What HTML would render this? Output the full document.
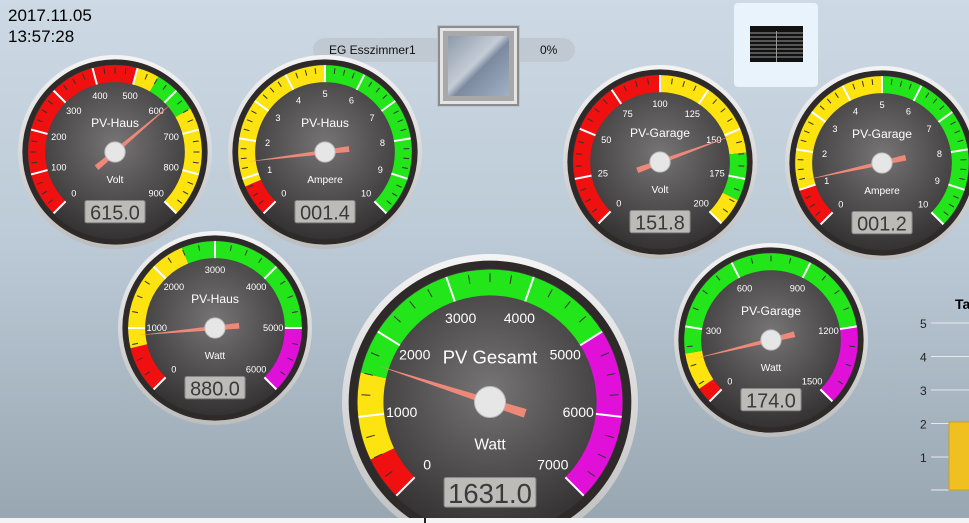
<!DOCTYPE html>
<html><head><meta charset="utf-8"><style>
html,body{margin:0;padding:0;width:969px;height:523px;overflow:hidden}
body{background:linear-gradient(#cdd9e4 0%,#bccbd7 45%,#97a6b1 100%);font-family:"Liberation Sans",sans-serif;position:relative}
#t{position:absolute;left:8px;top:5px;font-size:17px;line-height:21px;color:#000}
.pill{position:absolute;left:313px;top:38px;width:262px;height:24px;border-radius:12px;background:#c0c9d1;font-size:12px;color:#111}
.btn{position:absolute;left:437px;top:25px;width:83px;height:82px;background:#b9c3cc}
.tile{position:absolute;left:734px;top:3px;width:84px;height:84px;border-radius:4px;background:#e9f3fb}
#bot{position:absolute;left:0;top:518px;width:969px;height:5px;background:#f4f4f4}
</style></head><body>
<div id="t">2017.11.05<br>13:57:28</div>
<div class="pill"><span style="position:absolute;left:16px;top:5px">EG Esszimmer1</span><span style="position:absolute;left:227px;top:5px">0%</span></div>
<div class="btn"><div style="position:absolute;left:3px;top:3px;width:71px;height:70px;border:3px solid #e4e4e4;outline:2px solid #8c8c8c;background:#a8a8a8"><div style="position:absolute;left:5px;top:5px;width:61px;height:60px;background:linear-gradient(135deg,#8e9aaa 0%,#c4ccd6 45%,#7c8aa0 55%,#a2b0c6 100%)"></div></div></div>
<div class="tile"><svg width="84" height="84" style="position:absolute;left:0;top:0">
<rect x="16" y="23" width="53" height="36" fill="#111"/>
<g stroke="#999" stroke-width="1"><line x1="16" y1="30" x2="69" y2="30"/><line x1="16" y1="34" x2="69" y2="34"/><line x1="16" y1="38" x2="69" y2="38"/><line x1="16" y1="42" x2="69" y2="42"/><line x1="16" y1="46" x2="69" y2="46"/><line x1="16" y1="50" x2="69" y2="50"/><line x1="16" y1="54" x2="69" y2="54"/><line x1="42.5" y1="28" x2="42.5" y2="59"/></g></svg></div>
<svg id="g" width="969" height="523" style="position:absolute;left:0;top:0"></svg>
<div id="bot"><div style="position:absolute;left:424px;top:0;width:2px;height:5px;background:#222"></div></div>
<script>
var out='';
out+='<defs><radialGradient id="face" cx="50%" cy="45%" r="55%"><stop offset="0" stop-color="#767474"/><stop offset="1" stop-color="#343232"/></radialGradient><linearGradient id="ring" x1="0" y1="0" x2="0" y2="1"><stop offset="0" stop-color="#f4f4f4"/><stop offset="1" stop-color="#bdbdbd"/></linearGradient></defs>';
out+='<text x="955" y="309" font-size="14" font-weight="bold">Ta</text>';
[5,4,3,2,1].forEach(function(v,i){var y=323+i*33.5;out+='<text x="920" y="'+(y+5)+'" font-size="12" fill="#222">'+v+'</text><line x1="931" y1="'+y+'" x2="969" y2="'+y+'" stroke="#e6eaee" stroke-width="1"/>';});
out+='<line x1="931" y1="490" x2="969" y2="490" stroke="#eee"/><rect x="949" y="422" width="22" height="68" fill="#f0c020" stroke="#c8a020"/>';
function P(cx,cy,r,a){var t=(a-90)*Math.PI/180;return [cx+r*Math.cos(t),cy+r*Math.sin(t)];}
function arc(cx,cy,r1,r2,a1,a2,c){var p1=P(cx,cy,r2,a1),p2=P(cx,cy,r2,a2),p3=P(cx,cy,r1,a2),p4=P(cx,cy,r1,a1),l=(a2-a1)>180?1:0;
return '<path d="M'+p1+' A'+r2+' '+r2+' 0 '+l+' 1 '+p2+' L'+p3+' A'+r1+' '+r1+' 0 '+l+' 0 '+p4+'Z" fill="'+c+'"/>';}
function g(cx,cy,r,max,step,zones,val,title,unit,disp,big){
 var s='',A=function(v){return -135+270*v/max;};
 s+='<circle cx="'+cx+'" cy="'+cy+'" r="'+r+'" fill="url(#ring)"/>';
 s+='<circle cx="'+cx+'" cy="'+cy+'" r="'+(r*0.955)+'" fill="#2e2a29"/>';
 s+='<circle cx="'+cx+'" cy="'+cy+'" r="'+(r*0.9)+'" fill="url(#face)"/>';
 zones.forEach(function(z){s+=arc(cx,cy,r*0.72,r*0.895,A(z[0]),A(z[1]),z[2]);});
 for(var v=0;v<=max+1e-9;v+=step/4){var a=A(v),k=v/step,maj=Math.abs(k-Math.round(k))<1e-6;
  if(!maj){var p=P(cx,cy,r*0.81,a),q=P(cx,cy,r*0.87,a);s+='<line x1="'+p[0]+'" y1="'+p[1]+'" x2="'+q[0]+'" y2="'+q[1]+'" stroke="#333" stroke-width="1"/>';}
  else{var p=P(cx,cy,r*0.72,a),q=P(cx,cy,r*0.895,a);s+='<line x1="'+p[0]+'" y1="'+p[1]+'" x2="'+q[0]+'" y2="'+q[1]+'" stroke="#fff" stroke-width="2"/>';}}
 var fs=r*0.095;
 for(var v=0;v<=max+1e-9;v+=step){var p=P(cx,cy,r*0.6,A(v));s+='<text x="'+p[0]+'" y="'+(p[1]+fs*0.35)+'" font-size="'+fs+'" fill="#fff" text-anchor="middle">'+v+'</text>';}
 s+='<text x="'+cx+'" y="'+(cy-r*0.26)+'" font-size="'+(r*0.125)+'" fill="#fff" text-anchor="middle">'+title+'</text>';
 s+='<text x="'+cx+'" y="'+(cy+r*0.32)+'" font-size="'+(r*0.105)+'" fill="#fff" text-anchor="middle">'+unit+'</text>';
 var w=r*0.62,h=big?r*0.2:r*0.23,top=cy+r*(big?0.51:0.5);
 s+='<rect x="'+(cx-w/2)+'" y="'+top+'" width="'+w+'" height="'+h+'" rx="2" fill="#bdbbb8" stroke="#8a8886"/>';
 s+='<text x="'+cx+'" y="'+(top+h*0.86)+'" font-size="'+(big?r*0.185:r*0.205)+'" fill="#3a3a3a" text-anchor="middle">'+disp+'</text>';
 var a=A(val),tip=P(cx,cy,r*0.8,a),tail=P(cx,cy,r*0.25,a+180),b1=P(cx,cy,r*0.03,a+90),b2=P(cx,cy,r*0.03,a-90);
 s+='<path d="M'+tip+' L'+[b1[0]+(tail[0]-cx),b1[1]+(tail[1]-cy)]+' L'+[b2[0]+(tail[0]-cx),b2[1]+(tail[1]-cy)]+'Z" fill="#ee8878"/>';
 s+='<circle cx="'+cx+'" cy="'+cy+'" r="'+(r*0.105)+'" fill="#e6e6e6" stroke="#bbb"/>';
 return s;}
var R='#f01010',Y='#fde310',G='#22e51a',M='#e010d8';
out+=g(115,152,97,900,100,[[0,500,R],[500,550,Y],[550,650,G],[650,900,Y]],615,'PV-Haus','Volt','615.0');
out+=g(325,152,97,10,1,[[0,0.8,R],[0.8,5,Y],[5,10,G]],1.4,'PV-Haus','Ampere','001.4');
out+=g(215,328,97,6000,1000,[[0,700,R],[700,2500,Y],[2500,5000,G],[5000,6000,M]],880,'PV-Haus','Watt','880.0');
out+=g(660,162,97,200,25,[[0,100,R],[100,162,Y],[162,186,G],[186,200,Y]],151.8,'PV-Garage','Volt','151.8');
out+=g(882,163,97,10,1,[[0,1,R],[1,5,Y],[5,10,G]],1.2,'PV-Garage','Ampere','001.2');
out+=g(771,340,97,1500,300,[[0,60,R],[60,200,Y],[200,1200,G],[1200,1500,M]],174,'PV-Garage','Watt','174.0');
out+=g(490,402,148,7000,1000,[[0,500,R],[500,1500,Y],[1500,5000,G],[5000,7000,M]],1631,'PV Gesamt','Watt','1631.0',true);
var sv=document.getElementById('g');sv.setAttribute('font-family','Liberation Sans, sans-serif');sv.innerHTML=out;
</script>
</body></html>
